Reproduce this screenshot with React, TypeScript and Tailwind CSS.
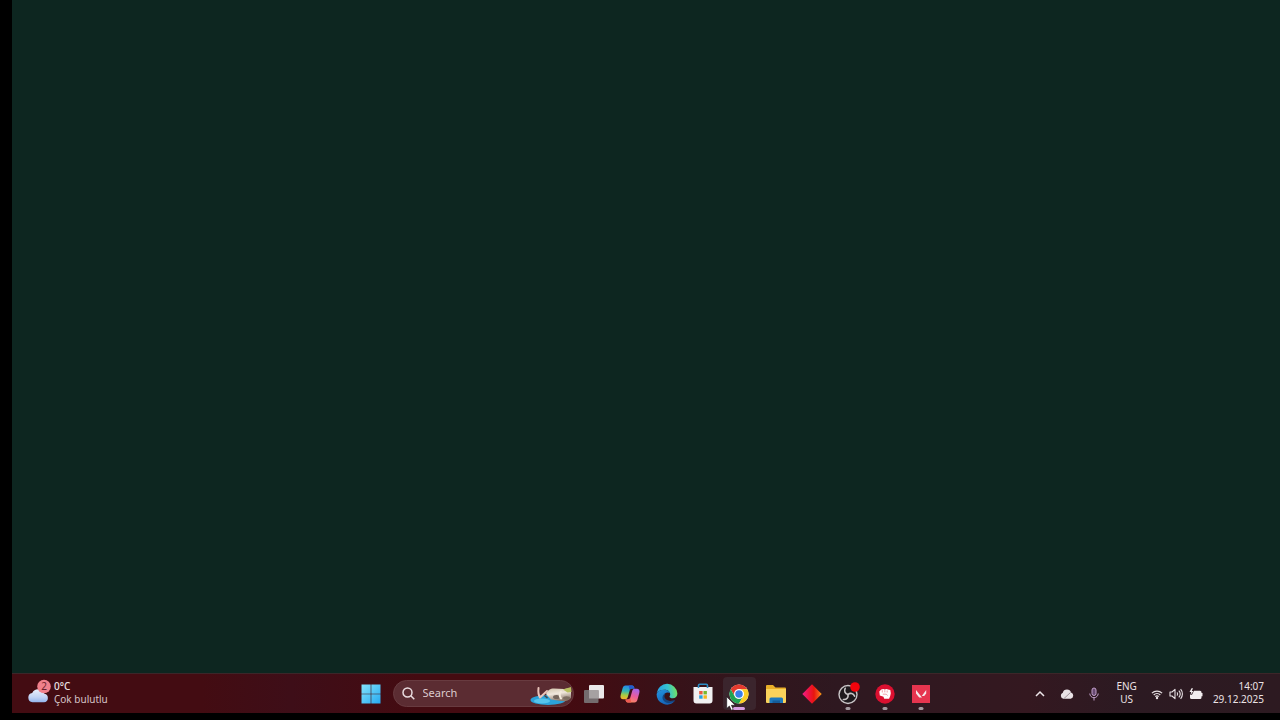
import type { ReactNode } from "react";

function TaskButton({
  label,
  children,
  state = "idle",
}: {
  label: string;
  children: ReactNode;
  state?: "idle" | "running" | "active";
}) {
  return (
    <button
      type="button"
      aria-label={label}
      className={
        state === "active"
          ? "relative flex h-[33px] w-[33px] items-center justify-center rounded bg-[#3b252d]"
          : "relative flex h-[33px] w-[33px] items-center justify-center rounded"
      }
    >
      {children}
      {state === "running" && (
        <span className="absolute bottom-0 left-1/2 h-[3px] w-[5px] -translate-x-1/2 rounded-full bg-[#a39aa0]" />
      )}
      {state === "active" && (
        <span className="absolute bottom-0 left-1/2 h-[3px] w-3 -translate-x-1/2 rounded-full bg-[#d79fe2]" />
      )}
    </button>
  );
}

function WeatherIcon() {
  return (
    <svg width="26" height="28" viewBox="0 0 26 28">
      <defs>
        <linearGradient id="cloud" x1="0" y1="0" x2="0" y2="1">
          <stop offset="0" stopColor="#e9effc" />
          <stop offset="0.600" stopColor="#c3d3f4" />
          <stop offset="1" stopColor="#93b5ee" />
        </linearGradient>
      </defs>
      <path
        d="M6.500 23.300a4.700 4.700 0 0 1-.3-9.300a6.600 6.600 0 0 1 12.200.8a4.300 4.300 0 0 1-.4 8.500z"
        fill="url(#cloud)"
      />
      <circle cx="18" cy="7.500" r="6.800" fill="#f0808b" />
      <text x="18" y="11" textAnchor="middle" fontSize="10" fill="#6b1f2c">
        2
      </text>
    </svg>
  );
}

function StartIcon() {
  return (
    <svg width="20" height="20" viewBox="0 0 20 20">
      <defs>
        <linearGradient id="start" x1="0" y1="0" x2="1" y2="1">
          <stop offset="0" stopColor="#83e3fb" />
          <stop offset="1" stopColor="#26aaf1" />
        </linearGradient>
      </defs>
      <path d="M.5.5h9.200v9.200H.5zM10.300.5h9.200v9.200h-9.200zM.5 10.300h9.200v9.200H.5zM10.300 10.300h9.200v9.200h-9.200z" fill="url(#start)" />
    </svg>
  );
}

function SearchArt() {
  return (
    <svg width="44" height="21" viewBox="0 0 44 21" className="absolute right-0 bottom-0">
      <defs>
        <linearGradient id="fur" x1="0" y1="0" x2="0.300" y2="1">
          <stop offset="0" stopColor="#cfc2a8" />
          <stop offset="0.500" stopColor="#f0e7dc" />
          <stop offset="1" stopColor="#8f7d70" />
        </linearGradient>
      </defs>
      <ellipse cx="19" cy="15" rx="17.500" ry="5" fill="#2ba3da" />
      <ellipse cx="13" cy="16" rx="8" ry="2.400" fill="#56c4ec" />
      <path d="M17 9c2-4 4-5.500 8-5.500l10 .5 7-1v10c-3 3-6 3.500-10 3l-10-1.500z" fill="url(#fur)" />
      <path d="M34 4.500l8-2.500.5 5-4 .5z" fill="#b9c061" />
      <path d="M9.500 3c-.5 4 0 7 1.500 9.500l7-6.500" fill="none" stroke="#e9c3b9" strokeWidth="2" strokeLinecap="round" strokeLinejoin="round" />
      <path d="M15.500 10.500l3 2.500" stroke="#4d4242" strokeWidth="1.500" />
      <ellipse cx="27.500" cy="12" rx="3.500" ry="2" fill="#75665c" />
      <path d="M32 6.500c-1.500 2-1.500 5 0 7" fill="none" stroke="#f4eadc" strokeWidth="2" strokeLinecap="round" />
      <ellipse cx="37.500" cy="13" rx="3.500" ry="1.800" fill="#7e6e62" />
    </svg>
  );
}

function TaskViewIcon() {
  return (
    <svg width="22" height="20" viewBox="0 0 22 20">
      <rect x="6" y="1" width="15" height="13.500" rx="1" fill="#ebe9ea" />
      <rect x="1" y="6" width="14.500" height="13" rx="1" fill="#746c6e" />
      <path d="M6 6h9.500v8.500H6z" fill="#a6a1a2" />
    </svg>
  );
}

function CopilotIcon() {
  return (
    <svg width="20" height="20" viewBox="0 0 20 20">
      <defs>
        <linearGradient id="copL" x1="0.400" y1="0" x2="0.300" y2="1">
          <stop offset="0" stopColor="#2787ea" />
          <stop offset="0.400" stopColor="#31b6b4" />
          <stop offset="0.700" stopColor="#a5cc43" />
          <stop offset="1" stopColor="#f6b32c" />
        </linearGradient>
        <linearGradient id="copR" x1="0.700" y1="0" x2="0.300" y2="1">
          <stop offset="0" stopColor="#a565ec" />
          <stop offset="0.500" stopColor="#eb5c9c" />
          <stop offset="1" stopColor="#fb8b5c" />
        </linearGradient>
      </defs>
      <path d="M5.500 1.500H12c1.500 0 2 .9 2.500 3H12c-1.300 0-2 .8-2.400 2.200L7.800 13c-.5 1.600-1.300 2.200-2.800 2.200H3.200C.8 15.200 0 13.500.7 11L2.500 4.500C3.200 2.300 3.900 1.500 5.500 1.500z" fill="url(#copL)" />
      <path d="M14.500 18.500H8c-1.600 0-2.100-.9-2.600-3H8c1.300 0 2-.8 2.400-2.200L12.200 7c.5-1.600 1.300-2.200 2.800-2.200h1.800c2.400 0 3.200 1.700 2.500 4.200l-1.800 6.500c-.7 2.200-1.400 3-3 3z" fill="url(#copR)" />
      <path d="M8.700 1.500H12c1.500 0 2 .9 2.500 3H12c-1.200 0-1.900.700-2.300 1.900z" fill="#235cd0" />
      <path d="M5.400 15.500H8c1.200 0 1.900-.700 2.300-1.900l.9 4.900H8c-1.600 0-2.100-.9-2.600-3z" fill="#ef5a52" />
    </svg>
  );
}

function EdgeIcon() {
  return (
    <svg width="22" height="22" viewBox="0 0 22 22">
      <defs>
        <linearGradient id="edgeTop" x1="0" y1="0.500" x2="1" y2="0.400">
          <stop offset="0" stopColor="#279fe5" />
          <stop offset="0.550" stopColor="#35c3d0" />
          <stop offset="1" stopColor="#76e35a" />
        </linearGradient>
        <linearGradient id="edgeLow" x1="0" y1="0" x2="0.600" y2="1">
          <stop offset="0" stopColor="#2394e0" />
          <stop offset="1" stopColor="#1560b4" />
        </linearGradient>
      </defs>
      <path d="M.7 10A10.400 10.400 0 0 1 21.400 10.500c0 3-2 4.700-4.600 4.700-2 0-3.300-.6-3.300-1.500 0-.7.7-1 .7-2.500 0-2-2-4.400-5.500-4.400C4.500 6.800 2 8.500.7 10z" fill="url(#edgeTop)" />
      <path d="M.6 11C1.500 8.200 4.700 6.800 8.300 6.800c3 0 5.200 1.300 5.800 3.200-3-1.500-6.600.2-6.600 3.600 0 4 4.500 6.700 11.200 4.500A10.400 10.400 0 0 1 .6 11z" fill="url(#edgeLow)" />
      <path d="M9.700 10.600c-3.200 3 0 7.400 4.500 7.300 2 0 3.500-.4 5-1.100-.3.700-.9 1.400-1.500 2-4.700 2.700-11.200.4-11.200-4.400 0-1.900 1.400-3.400 3.200-3.800z" fill="#15457f" />
    </svg>
  );
}

function StoreIcon() {
  return (
    <svg width="20" height="21" viewBox="0 0 20 21">
      <path d="M.5 4h19v13.500a3 3 0 0 1-3 3h-13a3 3 0 0 1-3-3z" fill="#f1f0f2" />
      <path d="M5.500 5V2.500c0-.8.500-1.300 1.300-1.300h6.400c.8 0 1.300.5 1.300 1.300V5" fill="none" stroke="#2b8cc4" strokeWidth="1.600" />
      <path d="M6.200 8h3.400v3.400H6.200z" fill="#e85a42" />
      <path d="M10.500 8h3.400v3.400h-3.400z" fill="#77b82f" />
      <path d="M6.200 12.300h3.400v3.400H6.200z" fill="#259fdf" />
      <path d="M10.500 12.300h3.400v3.400h-3.400z" fill="#f5b51e" />
    </svg>
  );
}

function ChromeIcon() {
  return (
    <svg width="20" height="20" viewBox="0 0 48 48">
      <circle cx="24" cy="24" r="23" fill="#fff" />
      <path d="M24 1a23 23 0 0 1 19.900 11.500H24A11.500 11.500 0 0 0 14 29.800L4.100 12.500A23 23 0 0 1 24 1z" fill="#e33b2e" />
      <path d="M4.100 12.500L14 29.800a11.500 11.500 0 0 0 20 0L24 47A23 23 0 0 1 4.100 12.500z" fill="#21a353" />
      <path d="M43.900 12.500A23 23 0 0 1 24 47l10-17.200a11.500 11.500 0 0 0-10-17.300z" fill="#fccd22" />
      <circle cx="24" cy="24" r="11.500" fill="#fff" />
      <circle cx="24" cy="24" r="9" fill="#397fe9" />
    </svg>
  );
}

function FolderIcon() {
  return (
    <svg width="22" height="20" viewBox="0 0 22 20">
      <path d="M1 2a1 1 0 0 1 1-1h6l2.500 2.500H20a1 1 0 0 1 1 1V17H1z" fill="#e9ae28" />
      <path d="M1 5h20v13a1 1 0 0 1-1 1H2a1 1 0 0 1-1-1z" fill="#fad25b" />
      <path d="M4.500 19v-4a1.500 1.500 0 0 1 1.500-1.500h10.500A1.500 1.500 0 0 1 18 15v4z" fill="#1d78bd" />
      <path d="M7.500 16.500H15V19H7.500z" fill="#155b99" />
    </svg>
  );
}

function DiamondIcon() {
  return (
    <svg width="20" height="20" viewBox="0 0 20 20">
      <defs>
        <linearGradient id="diamond" x1="0" y1="0" x2="1" y2="0">
          <stop offset="0" stopColor="#f0208a" />
          <stop offset="0.350" stopColor="#ee1240" />
          <stop offset="0.600" stopColor="#e8160f" />
          <stop offset="0.850" stopColor="#f4581a" />
          <stop offset="1" stopColor="#ffb012" />
        </linearGradient>
      </defs>
      <path d="M10 .3L19.700 10 10 19.700.3 10z" fill="url(#diamond)" />
    </svg>
  );
}

function ObsIcon() {
  return (
    <svg width="24" height="24" viewBox="0 0 24 24">
      <circle cx="12" cy="12.500" r="9" fill="#1f1a1e" stroke="#c9c5c7" strokeWidth="1.400" />
      <g fill="none" stroke="#c9c5c7" strokeWidth="1.600" strokeLinecap="round">
        <path d="M12 12.500c-3-.8-4.200-3.500-2.800-6.200" />
        <path d="M12 12.500c2.300-2 5.400-1.200 6.600 1.600" />
        <path d="M12 12.500c.6 3-1.300 5.300-4.600 5" />
      </g>
      <circle cx="19" cy="5" r="4.800" fill="#f2040c" />
    </svg>
  );
}

function FistIcon() {
  return (
    <svg width="20" height="20" viewBox="0 0 20 20">
      <circle cx="10" cy="10" r="9.700" fill="#db1030" />
      <path d="M4.300 7.600L6.200 5.600l2.200-.5 1.400.3 1.600-.3 1.700.4 2.200.5.500 3.300-.6 2.600-1.100 2.800H9.200L8.500 12.800l-3.700-1.400z" fill="#fff" />
      <path d="M7.300 6.200v2.300M9.800 6.200v2.200M12.200 6.500v2M7.800 10.200h3.400l1.500 1.300" fill="none" stroke="#db1030" strokeWidth="0.400" />
    </svg>
  );
}

function ValorantIcon() {
  return (
    <svg width="18" height="18" viewBox="0 0 18 18">
      <path d="M0 0h18v18H0z" fill="#e6354f" />
      <path d="M4 5l6 7.500H7.200L4 8.500zM14.200 5v3.500l-2 2.500H9.800z" fill="#f5e9eb" />
    </svg>
  );
}

function CursorIcon() {
  return (
    <svg width="11" height="16" viewBox="0 0 11 16" className="absolute top-[19px] left-[3px]">
      <path d="M.7.700v11.800l2.700-2.500 1.900 4.300 2-.9-1.900-4.100h3.800z" fill="#fff" stroke="#171317" strokeWidth="0.600" />
    </svg>
  );
}

function TrayChevron() {
  return (
    <svg width="12" height="12" viewBox="0 0 12 12">
      <path d="M2 8l4-4 4 4" fill="none" stroke="#eee7ea" strokeWidth="1.500" />
    </svg>
  );
}

function TrayCloud() {
  return (
    <svg width="14" height="12" viewBox="0 0 14 12">
      <path d="M3.500 10.800A3.200 3.200 0 0 1 2.800 4.700a4.300 4.300 0 0 1 8.300-.2 3.300 3.300 0 0 1-.4 6.300z" fill="#e9e2e5" />
      <path d="M4 10.500l6.500-6" stroke="#9f9299" />
    </svg>
  );
}

function TrayMic() {
  return (
    <svg width="12" height="14" viewBox="0 0 12 14">
      <rect x="4" y="1" width="4" height="7.500" rx="2" fill="#684a71" stroke="#c2a0cb" />
      <path d="M1.800 6.500a4.200 4.200 0 0 0 8.400 0M6 10.700V13.500" fill="none" stroke="#c2a0cb" />
    </svg>
  );
}

function WifiIcon() {
  return (
    <svg width="12" height="12" viewBox="0 0 12 12">
      <g fill="none" stroke="#e8e1e4" strokeWidth="1.200">
        <path d="M.9 5.200a7.200 7.200 0 0 1 10.200 0" />
        <path d="M2.700 7a4.700 4.700 0 0 1 6.600 0" />
        <path d="M4.300 8.600a2.400 2.400 0 0 1 3.400 0" />
      </g>
      <circle cx="6" cy="10" r="1.200" fill="#e8e1e4" />
    </svg>
  );
}

function VolumeIcon() {
  return (
    <svg width="14" height="12" viewBox="0 0 14 12">
      <g fill="none" stroke="#e8e1e4" strokeLinejoin="round" strokeWidth="1.100">
        <path d="M1 4h2l3-2.700v9.400L3 8H1z" />
        <path d="M8 4.300a2.800 2.800 0 0 1 0 3.400M9.800 2.700a5 5 0 0 1 0 6.600M11.600 1.200a7.300 7.300 0 0 1 0 9.600" />
      </g>
    </svg>
  );
}

function BatteryIcon() {
  return (
    <svg width="14" height="12" viewBox="0 0 14 12">
      <path d="M5 2.800h6a1.500 1.500 0 0 1 1.500 1.500V5h1v3.200h-1V9.500A1.500 1.500 0 0 1 11 11H2.500A1.500 1.500 0 0 1 1 9.500V6.800H3z" fill="#f2edef" />
      <path d="M2.500.300L.5 4h1.700L1.500 7 4.500 3H2.800L4 .300z" fill="#f2edef" />
    </svg>
  );
}

export default function App() {
  return (
    <div className="flex min-h-screen flex-col bg-black pb-[7px] pl-3 font-['Noto_Sans','Open_Sans',sans-serif] text-[#ece3e5]">
      <main className="flex-1 bg-[#0d2620]" />

      <footer className="grid h-10 grid-cols-[1fr_auto_1fr] items-center border-t border-[#3c2629] bg-[linear-gradient(to_right,#430c12_0%,#430c12_15%,#3e0e18_22%,#440b11_32%,#440b11_44%,#34141b_55%,#2e1820_65%,#341820_80%,#2c1a22_88%,#2d1a21_100%)]">
        <button type="button" className="flex items-center gap-[2px] justify-self-start pb-[2px] pl-[14px] text-left">
          <WeatherIcon />
          <span className="flex flex-col text-[10px] leading-[13px]">
            <span className="font-medium">0°C</span>
            <span className="text-[#d6c4c7]">Çok bulutlu</span>
          </span>
        </button>

        <div className="flex items-center">
          <button type="button" aria-label="Start" className="mr-[5px] flex h-[33px] w-[33px] items-center justify-center">
            <StartIcon />
          </button>

          <label className="relative mr-1 flex h-[27px] w-[181px] items-center gap-2 overflow-hidden rounded-full border border-[#683b40] bg-[#5b2c32] pl-2">
            <svg width="13" height="13" viewBox="0 0 13 13" fill="none" stroke="#eadde0" strokeWidth="1.500">
              <circle cx="5.500" cy="5.500" r="4.500" />
              <path d="M8.800 8.800l3.500 3.500" />
            </svg>
            <input
              type="text"
              aria-label="Search"
              placeholder="Search"
              className="w-20 bg-transparent text-[11px] outline-none placeholder:text-[#dccbce]"
            />
            <SearchArt />
          </label>

          <nav className="flex w-[360px] justify-between" aria-label="Taskbar">
            <TaskButton label="Task view"><TaskViewIcon /></TaskButton>
            <TaskButton label="Copilot"><CopilotIcon /></TaskButton>
            <TaskButton label="Edge"><EdgeIcon /></TaskButton>
            <TaskButton label="Store"><StoreIcon /></TaskButton>
            <TaskButton label="Chrome" state="active">
              <ChromeIcon />
              <CursorIcon />
            </TaskButton>
            <TaskButton label="File Explorer"><FolderIcon /></TaskButton>
            <TaskButton label="Diamond"><DiamondIcon /></TaskButton>
            <TaskButton label="OBS Studio" state="running"><ObsIcon /></TaskButton>
            <TaskButton label="Riot Client" state="running"><FistIcon /></TaskButton>
            <TaskButton label="Valorant" state="running"><ValorantIcon /></TaskButton>
          </nav>
        </div>

        <div className="flex items-center justify-self-end pr-4 text-[10px] leading-[13px]">
          <div className="flex items-center gap-[14px]">
            <button type="button" aria-label="Show hidden icons"><TrayChevron /></button>
            <button type="button" aria-label="OneDrive"><TrayCloud /></button>
            <button type="button" aria-label="Microphone"><TrayMic /></button>
          </div>
          <button type="button" className="ml-4 flex flex-col items-center pb-[2px]">
            <span>ENG</span>
            <span>US</span>
          </button>
          <button type="button" aria-label="Network, volume and battery" className="ml-[14px] flex items-center gap-[6px]">
            <WifiIcon />
            <VolumeIcon />
            <BatteryIcon />
          </button>
          <button type="button" className="ml-[10px] flex flex-col items-end pb-[2px]">
            <span>14:07</span>
            <span>29.12.2025</span>
          </button>
        </div>
      </footer>
    </div>
  );
}
